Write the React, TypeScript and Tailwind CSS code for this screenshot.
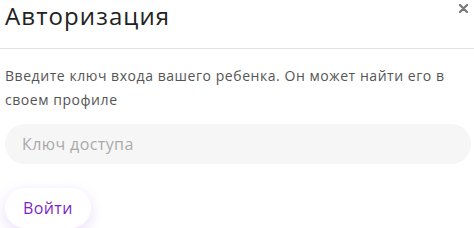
import React from "react";

export default function App() {
  return (
    <div className="w-[474px] h-[228px] overflow-hidden bg-white relative" style={{ fontFamily: '"Open Sans", "Noto Sans", sans-serif' }}>
      <div className="h-[49px] border-b border-[#e2e2e2] px-[5px] pt-[0px] flex items-start">
        <h1 className="text-[24px] leading-[32px] text-[#222] tracking-[1.1px]">Авторизация</h1>
      </div>
      <button className="absolute right-[6px] top-[3px] w-[10px] h-[10px] flex items-center justify-center">
        <svg width="9" height="9" viewBox="0 0 9 9">
          <path d="M1 1L8 8M8 1L1 8" stroke="#777" strokeWidth="2.2" strokeLinecap="round" />
        </svg>
      </button>
      <div className="pl-[5px] pr-[3px] pt-[15px]">
        <p className="text-[14px] leading-[24px] text-[#555] tracking-[0.55px]">
          Введите ключ входа вашего ребенка. Он может найти его в своем профиле
        </p>
        <div className="mt-[12px] h-[40px] rounded-full bg-[#f6f6f6] flex items-center px-[17px]">
          <span className="text-[16px] text-[#aaa] tracking-[0.4px]">Ключ доступа</span>
        </div>
        <div className="mt-[24px]">
          <button className="h-[40px] px-[18px] rounded-full bg-white text-[16px] text-[#7f1fc9] tracking-[0.4px] shadow-[0_4px_14px_rgba(140,60,230,0.18)]">
            Войти
          </button>
        </div>
      </div>
    </div>
  );
}
